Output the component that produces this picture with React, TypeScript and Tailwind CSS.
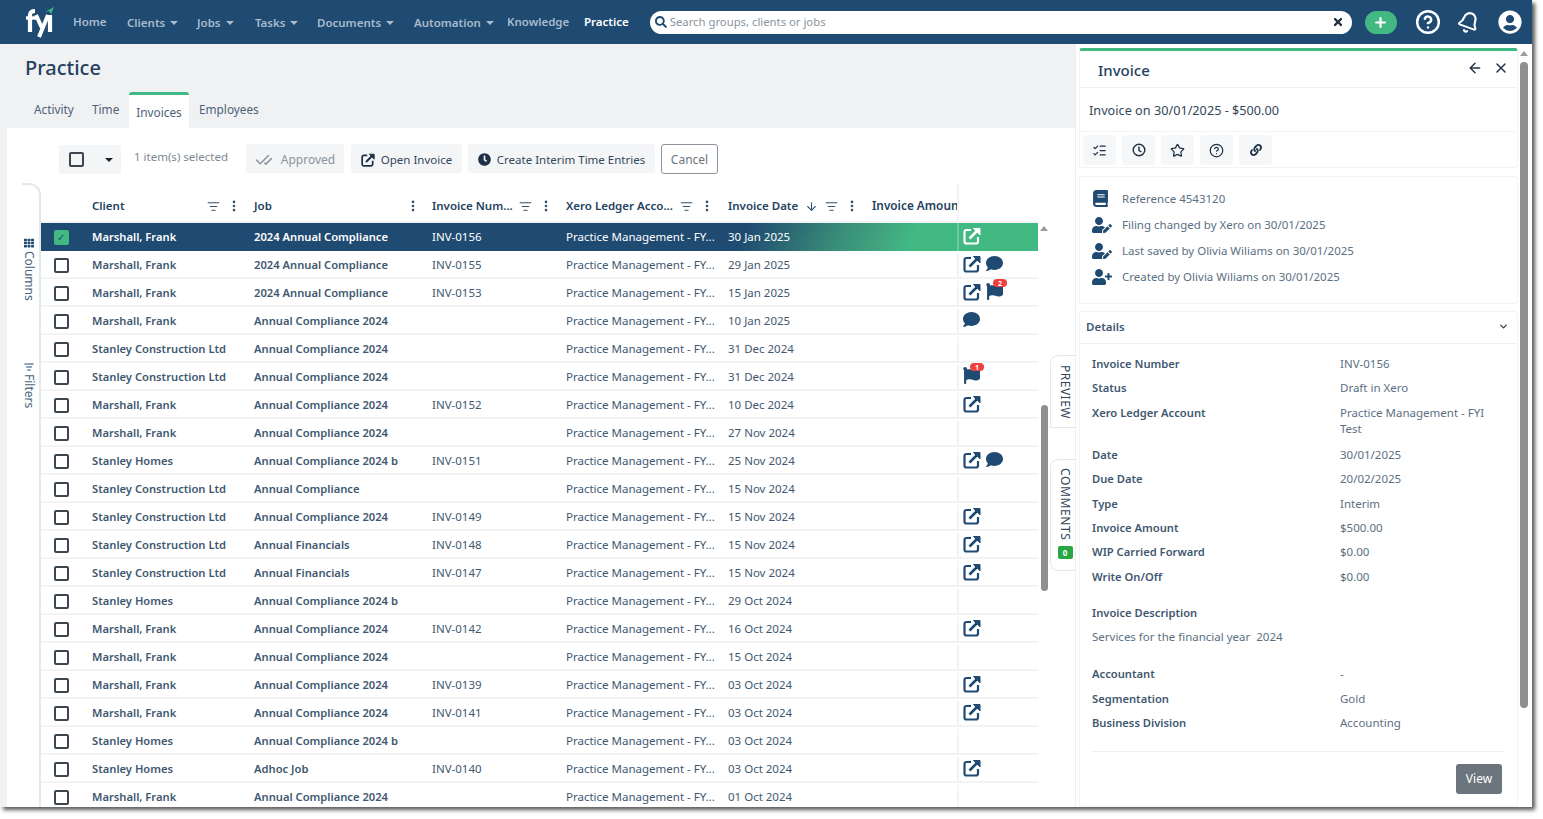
import {
  ArrowDown,
  ArrowLeft,
  Bell,
  CheckCheck,
  ChevronDown,
  CircleHelp,
  EllipsisVertical,
  ListChecks,
  ListFilter,
  Plus,
  Star,
  X,
} from 'lucide-react'
import { FaBook, FaClock, FaComment, FaFlag, FaLink, FaSearch, FaTh, FaTimes, FaUserCircle, FaUserEdit, FaUserPlus } from 'react-icons/fa'

type Row = {
  client: string
  job: string
  inv?: string
  date: string
  open?: boolean
  comment?: boolean
  flag?: number
}

const ROWS: Row[] = [
  { client: 'Marshall, Frank', job: '2024 Annual Compliance', inv: 'INV-0156', date: '30 Jan 2025', open: true },
  { client: 'Marshall, Frank', job: '2024 Annual Compliance', inv: 'INV-0155', date: '29 Jan 2025', open: true, comment: true },
  { client: 'Marshall, Frank', job: '2024 Annual Compliance', inv: 'INV-0153', date: '15 Jan 2025', open: true, flag: 2 },
  { client: 'Marshall, Frank', job: 'Annual Compliance 2024', date: '10 Jan 2025', comment: true },
  { client: 'Stanley Construction Ltd', job: 'Annual Compliance 2024', date: '31 Dec 2024' },
  { client: 'Stanley Construction Ltd', job: 'Annual Compliance 2024', date: '31 Dec 2024', flag: 1 },
  { client: 'Marshall, Frank', job: 'Annual Compliance 2024', inv: 'INV-0152', date: '10 Dec 2024', open: true },
  { client: 'Marshall, Frank', job: 'Annual Compliance 2024', date: '27 Nov 2024' },
  { client: 'Stanley Homes', job: 'Annual Compliance 2024 b', inv: 'INV-0151', date: '25 Nov 2024', open: true, comment: true },
  { client: 'Stanley Construction Ltd', job: 'Annual Compliance', date: '15 Nov 2024' },
  { client: 'Stanley Construction Ltd', job: 'Annual Compliance 2024', inv: 'INV-0149', date: '15 Nov 2024', open: true },
  { client: 'Stanley Construction Ltd', job: 'Annual Financials', inv: 'INV-0148', date: '15 Nov 2024', open: true },
  { client: 'Stanley Construction Ltd', job: 'Annual Financials', inv: 'INV-0147', date: '15 Nov 2024', open: true },
  { client: 'Stanley Homes', job: 'Annual Compliance 2024 b', date: '29 Oct 2024' },
  { client: 'Marshall, Frank', job: 'Annual Compliance 2024', inv: 'INV-0142', date: '16 Oct 2024', open: true },
  { client: 'Marshall, Frank', job: 'Annual Compliance 2024', date: '15 Oct 2024' },
  { client: 'Marshall, Frank', job: 'Annual Compliance 2024', inv: 'INV-0139', date: '03 Oct 2024', open: true },
  { client: 'Marshall, Frank', job: 'Annual Compliance 2024', inv: 'INV-0141', date: '03 Oct 2024', open: true },
  { client: 'Stanley Homes', job: 'Annual Compliance 2024 b', date: '03 Oct 2024' },
  { client: 'Stanley Homes', job: 'Adhoc Job', inv: 'INV-0140', date: '03 Oct 2024', open: true },
  { client: 'Marshall, Frank', job: 'Annual Compliance 2024', date: '01 Oct 2024' },
]

const NAV = [
  { label: 'Home', w: 'w-[54px]' },
  { label: 'Clients', w: 'w-[70px]', caret: true },
  { label: 'Jobs', w: 'w-[58px]', caret: true },
  { label: 'Tasks', w: 'w-[62px]', caret: true },
  { label: 'Documents', w: 'w-[97px]', caret: true },
  { label: 'Automation', w: 'w-[93px]', caret: true },
  { label: 'Knowledge', w: 'w-[77px]' },
]

const COLS = 'grid grid-cols-[51px_162px_178px_134px_162px_144px_85px_81px]'

function Caret({ className }: { className: string }) {
  return <span className={`inline-block h-0 w-0 border-x-[4px] border-t-[4px] border-x-transparent ${className}`} />
}

function UpCaret() {
  return <span className="inline-block h-0 w-0 border-x-[4px] border-b-[5px] border-x-transparent border-b-[#9a9a9a]" />
}

function OpenIcon({ className, size = 18 }: { className: string; size?: number }) {
  return (
    <svg width={size} height={size} viewBox="0 0 18 18" fill="none" stroke="currentColor" className={className}>
      <path d="M8 3H3.500A2 2 0 0 0 1.500 5v9.500a2 2 0 0 0 2 2H13a2 2 0 0 0 2-2V10" strokeWidth="2.200" />
      <path d="M6.500 11.500L15.500 2.500" strokeWidth="2.600" />
      <path d="M10.500 1.500h6.500V8z" fill="currentColor" strokeWidth="1" />
    </svg>
  )
}

function Logo() {
  return (
    <svg width="36" height="36" viewBox="0 0 36 36" className="shrink-0">
      <path d="M25 8l9-5-3 7-2-3z" fill="#42b883" />
      <path d="M10 28V11c0-3 2-4 5-4" fill="none" stroke="#fff" strokeWidth="4.200" />
      <path d="M6 14h10" fill="none" stroke="#fff" strokeWidth="3.400" />
      <path d="M16 11l6 13" fill="none" stroke="#fff" strokeWidth="4" />
      <path d="M28 11l-9 22" fill="none" stroke="#fff" strokeWidth="4" />
      <path d="M30 11v17" fill="none" stroke="#fff" strokeWidth="4.200" />
    </svg>
  )
}

function Header() {
  return (
    <header className="flex h-[44px] shrink-0 items-center bg-[#1f4a72] pl-[20px]">
      <Logo />
      <nav className="ml-[17px] flex items-center text-[11.500px] font-semibold text-[#a9bbcc]">
        {NAV.map((n) => (
          <div key={n.label} className={`flex items-center gap-[5px] ${n.w} ${n.caret ? 'pt-[2px]' : ''}`}>
            <span>{n.label}</span>
            {n.caret && <Caret className="border-t-[#a9bbcc]" />}
          </div>
        ))}
        <span className="text-white">Practice</span>
      </nav>
      <div className="ml-[21px] flex h-[23px] w-[702px] items-center rounded-full bg-white pl-[5px] pr-[8px] text-[11.300px] text-[#8a949e]">
        <FaSearch className="mr-[3px] text-[12px] text-[#1f4a72]" />
        <span className="flex-1">Search groups, clients or jobs</span>
        <FaTimes className="text-[12px] text-[#1d2b3a]" />
      </div>
      <div className="ml-[13px] flex h-[23px] w-[32px] items-center justify-center rounded-full bg-[#42b883]">
        <Plus size={15} strokeWidth={3.500} className="text-white" />
      </div>
      <CircleHelp size={26} strokeWidth={2.300} className="ml-[18px] text-white" />
      <Bell size={23} strokeWidth={2.200} className="ml-[16px] rotate-[20deg] text-white" />
      <FaUserCircle size={24} className="ml-[18px] text-white" />
    </header>
  )
}

function ToolButton({ children, className }: { children: React.ReactNode; className: string }) {
  return (
    <div className={`flex h-[29px] items-center justify-center rounded-[3px] bg-[#f4f5f6] pt-[2px] text-[11.500px] ${className}`}>
      {children}
    </div>
  )
}

function Toolbar() {
  return (
    <div className="flex h-[55px] shrink-0 items-start pl-[52px] pt-[16px]">
      <div className="mt-[1px] flex h-[29px] w-[62px] items-center rounded-[3px] bg-[#f4f5f6] pl-[10px]">
        <span className="h-[15px] w-[15px] rounded-[2px] border-2 border-[#3d4650]" />
        <Caret className="ml-[21px] border-t-[#222]" />
      </div>
      <span className="ml-[13px] mt-[4px] w-[112px] text-[11.500px] text-[#7d8894]">1 item(s) selected</span>
      <ToolButton className="w-[98px] gap-[8px] text-[#8a949e]">
        <CheckCheck size={18} className="text-[#8a949e]" />
        <span className="text-[12px]">Approved</span>
      </ToolButton>
      <ToolButton className="ml-[7px] w-[111px] gap-[6px] text-[#33475b]">
        <OpenIcon size={14} className="text-[#1e3146]" />
        Open Invoice
      </ToolButton>
      <ToolButton className="ml-[6px] w-[187px] gap-[6px] text-[#33475b]">
        <FaClock size={13} className="text-[#1e3146]" />
        Create Interim Time Entries
      </ToolButton>
      <div className="ml-[6px] flex h-[30px] w-[57px] items-center justify-center rounded-[3px] border border-[#8b949c] pt-[1px] text-[12px] text-[#6c757d]">
        Cancel
      </div>
    </div>
  )
}

function SideRail() {
  return (
    <div className="ml-[15px] w-[19px] shrink-0 rounded-tr-[12px] border-r-2 border-t-2 border-[#e3e8ea] text-[#4a6580]">
      <div className="flex flex-col items-center pr-[3px] pt-[53px]">
        <FaTh size={10} className="text-[#1f4a72]" />
        <span className="mt-[3px] text-[12px] leading-none [writing-mode:vertical-rl]">Columns</span>
        <ListFilter size={10} strokeWidth={2.500} className="mt-[61px] text-[#1f4a72]" />
        <span className="mt-[2px] text-[12px] leading-none [writing-mode:vertical-rl]">Filters</span>
      </div>
    </div>
  )
}

function HeadCell({ label, filter, menu = true, sort }: { label: string; filter?: boolean; menu?: boolean; sort?: boolean }) {
  return (
    <div className="flex h-full items-center pr-[3px] text-[11.500px] font-semibold text-[#24415f]">
      <span className="min-w-0 flex-1 whitespace-nowrap">{label}</span>
      {sort && <ArrowDown size={13} className="mr-[7px] text-[#33506c]" />}
      {filter && <ListFilter size={13} className="mr-[7px] text-[#33506c]" />}
      {menu && <EllipsisVertical size={14} strokeWidth={2.500} className="mr-[3px] text-[#33506c]" />}
    </div>
  )
}

function RowIcons({ row, selected }: { row: Row; selected: boolean }) {
  return (
    <div className={`flex h-full items-start gap-[5px] pl-[4px] ${selected ? 'pt-[4px]' : 'pt-[2px]'}`}>
      {row.open && <OpenIcon className={selected ? 'text-white' : 'text-[#1f4a72]'} />}
      {row.comment && <FaComment size={17} className="text-[#1f4a72]" />}
      {row.flag && (
        <div className="relative">
          <FaFlag size={17} className="text-[#1f4a72]" />
          <span className="absolute left-[7px] top-[-4px] flex h-[8px] w-[14px] items-center justify-center rounded-full bg-[#ef3f3f] text-[7px] font-bold leading-none text-white">
            {row.flag}
          </span>
        </div>
      )}
    </div>
  )
}

function TableRow({ row, selected }: { row: Row; selected: boolean }) {
  const text = selected ? 'text-white' : 'text-[#3f5870]'
  return (
    <div
      className={`${COLS} h-[28px] shrink-0 items-center text-[11.500px] ${
        selected
          ? 'bg-[linear-gradient(115deg,#1f4a72_0%,#1f4a72_70%,#2f7375_76%,#3a9079_80%,#3f9f7d_83%,#42b883_87%,#42b883_100%)]'
          : 'border-b-2 border-[#f1f3f4] pt-[2px]'
      } ${text}`}
    >
      <div className="flex justify-center pr-[11px]">
        {selected ? (
          <span className="flex h-[15px] w-[15px] items-center justify-center rounded-[2px] bg-[#42b883] text-[10px] text-[#1f4a72]">
            ✓
          </span>
        ) : (
          <span className="h-[15px] w-[15px] rounded-[2px] border-2 border-[#3d4650]" />
        )}
      </div>
      <div className="text-[11.200px] font-semibold">{row.client}</div>
      <div className="text-[11.200px] font-semibold">{row.job}</div>
      <div>{row.inv}</div>
      <div>Practice Management - FY...</div>
      <div>{row.date}</div>
      <div />
      <div className={`h-full border-l-2 ${selected ? 'border-[#6dcaa0]' : 'border-[#f1f3f4]'}`}>
        <RowIcons row={row} selected={selected} />
      </div>
    </div>
  )
}

function Table() {
  return (
    <div className="relative flex w-[997px] shrink-0 flex-col overflow-hidden">
      <div className={`${COLS} h-[40px] shrink-0 items-center border-b-2 border-[#f1f3f4] pt-[6px]`}>
        <div />
        <div className="h-full pr-[7px]"><HeadCell label="Client" filter /></div>
        <div className="h-full pr-[6px]"><HeadCell label="Job" /></div>
        <div className="h-full pr-[7px]"><HeadCell label="Invoice Num..." filter /></div>
        <div className="h-full pr-[8px]"><HeadCell label="Xero Ledger Acco..." filter /></div>
        <div className="h-full pr-[7px]"><HeadCell label="Invoice Date" sort filter /></div>
        <div className="overflow-hidden whitespace-nowrap text-[11.800px] font-semibold text-[#24415f]">Invoice Amount</div>
        <div className="-mt-[6px] h-[40px] border-l-2 border-[#f1f3f4]" />
      </div>
      {ROWS.map((r, i) => (
        <TableRow key={i} row={r} selected={i === 0} />
      ))}
    </div>
  )
}

function Scrollbar() {
  return (
    <div className="flex w-[12px] shrink-0 flex-col items-center pt-[43px]">
      <UpCaret />
      <div className="mt-[174px] h-[186px] w-[7px] rounded-full bg-[#8f8f8f]" />
    </div>
  )
}

function SideTabs() {
  return (
    <div className="flex w-[25px] shrink-0 flex-col pt-[172px] text-[#33475b]">
      <div className="flex h-[73px] items-center justify-center rounded-tl-[8px] border-y border-l border-[#e6e9eb] pl-[4px] text-[12px]">
        <span className="leading-none tracking-[0.5px] [writing-mode:vertical-rl]">PREVIEW</span>
      </div>
      <div className="mt-[31px] flex h-[112px] flex-col items-center rounded-l-[8px] border-y border-l border-[#e6e9eb] pl-[4px] pt-[8px] text-[12px]">
        <span className="leading-none tracking-[0.6px] [writing-mode:vertical-rl]">COMMENTS</span>
        <span className="mt-[6px] flex h-[13px] w-[15px] items-center justify-center rounded-[2px] bg-[#28a745] text-[8px] font-bold text-white">0</span>
      </div>
    </div>
  )
}

function Main() {
  return (
    <main className="flex w-[1075px] shrink-0 flex-col bg-[#f0f1f3]">
      <h1 className="pl-[25px] pt-[9px] text-[20px] font-medium leading-[30px] text-[#24415f]">Practice</h1>
      <div className="mt-[9px] flex h-[36px] items-end pl-[34px] text-[11.800px] text-[#4d6277]">
        <span className="mb-[9px] w-[58px]">Activity</span>
        <span className="mb-[9px] w-[37px]">Time</span>
        <span className="flex h-[36px] w-[60px] items-center justify-center rounded-t-[3px] border-t-[3px] border-[#42b883] bg-white pt-[3px]">Invoices</span>
        <span className="mb-[9px] ml-[10px]">Employees</span>
      </div>
      <div className="ml-[7px] flex min-h-0 flex-1 flex-col bg-white">
        <Toolbar />
        <div className="flex min-h-0 flex-1">
          <SideRail />
          <Table />
          <Scrollbar />
          <SideTabs />
        </div>
      </div>
    </main>
  )
}

function Detail({ label, value, className = 'h-[24.400px]' }: { label: string; value: string; className?: string }) {
  return (
    <div className={`flex items-start leading-[24px] ${className}`}>
      <span className="w-[248px] shrink-0 text-[11.200px] font-semibold text-[#3f5870]">{label}</span>
      <span className="flex-1 text-[#5b6f82]">{value}</span>
    </div>
  )
}

function Meta({ icon, text }: { icon: React.ReactNode; text: string }) {
  return (
    <div className="flex h-[25.900px] items-center">
      <span className="flex w-[30px] shrink-0 text-[#1f4a72]">{icon}</span>
      <span>{text}</span>
    </div>
  )
}

function IconBtn({ children }: { children: React.ReactNode }) {
  return <div className="flex h-[30px] w-[33px] items-center justify-center rounded-[3px] bg-[#f6f7f8] text-[#1e3146]">{children}</div>
}

function ClockOutline() {
  return (
    <svg width="14" height="14" viewBox="0 0 14 14" fill="none" stroke="currentColor" strokeWidth="1.400">
      <circle cx="7" cy="7" r="5.800" />
      <path d="M7 3.500V7.500L9.500 9" />
    </svg>
  )
}

function InvoicePanel() {
  return (
    <aside className="flex min-h-0 flex-1 border-l border-[#eceef0] bg-white pl-[3px] pt-[4px]">
      <div className="flex w-[439px] shrink-0 flex-col">
        <div className="h-[83px] rounded-t-[3px] border-x border-t-[3px] border-x-[#f1f3f4] border-t-[#42b883]">
          <div className="flex h-[37px] items-center border-b border-[#eef0f2] pl-[18px] pr-[8px] pt-[2px] text-[15px] font-medium text-[#24415f]">
            <span className="flex-1">Invoice</span>
            <ArrowLeft size={16} strokeWidth={2.200} className="-mt-[4px] mr-[10px] text-[#1e3146]" />
            <X size={16} strokeWidth={2.200} className="-mt-[4px] text-[#1e3146]" />
          </div>
          <div className="flex h-[43px] items-center pl-[9px] pt-[2px] text-[12.700px] text-[#33475b]">
            Invoice on 30/01/2025 - $500.00
          </div>
        </div>
        <div className="flex h-[37px] gap-[6px] rounded-b-[3px] border border-[#f1f3f4] pl-[3px] pt-[3px]">
          <IconBtn><ListChecks size={15} /></IconBtn>
          <IconBtn><ClockOutline /></IconBtn>
          <IconBtn><Star size={15} /></IconBtn>
          <IconBtn><CircleHelp size={15} /></IconBtn>
          <IconBtn><FaLink size={12} /></IconBtn>
        </div>
        <div className="mt-[8px] h-[128px] rounded-[3px] border border-[#f1f3f4] pl-[12px] pt-[9px] text-[11.500px] text-[#5b6f82]">
          <Meta icon={<FaBook size={17} />} text="Reference 4543120" />
          <Meta icon={<FaUserEdit size={20} />} text="Filing changed by Xero on 30/01/2025" />
          <Meta icon={<FaUserEdit size={20} />} text="Last saved by Olivia Wiliams on 30/01/2025" />
          <Meta icon={<FaUserPlus size={20} />} text="Created by Olivia Wiliams on 30/01/2025" />
        </div>
        <div className="mt-[7px] flex min-h-0 flex-1 flex-col rounded-[3px] border border-[#f1f3f4] text-[11.500px]">
          <div className="flex h-[32px] shrink-0 items-center border-b border-[#eef0f2] pb-[2px] pl-[6px] pr-[8px] text-[11.500px] font-semibold text-[#3f5870]">
            <span className="flex-1">Details</span>
            <ChevronDown size={11} strokeWidth={3} className="text-[#33475b]" />
          </div>
          <div className="flex flex-col px-[12px] pt-[8px]">
            <Detail label="Invoice Number" value="INV-0156" />
            <Detail label="Status" value="Draft in Xero" />
            <Detail label="Xero Ledger Account" value="Practice Management - FYI Test" className="h-[42px] [&>span:last-child]:pr-[5px] [&>span:last-child]:pt-[4px] [&>span:last-child]:leading-[16px]" />
            <Detail label="Date" value="30/01/2025" />
            <Detail label="Due Date" value="20/02/2025" />
            <Detail label="Type" value="Interim" />
            <Detail label="Invoice Amount" value="$500.00" />
            <Detail label="WIP Carried Forward" value="$0.00" />
            <Detail label="Write On/Off" value="$0.00" />
            <div className="mt-[12px] text-[11.200px] font-semibold leading-[24px] text-[#3f5870]">Invoice Description</div>
            <div className="leading-[24px] text-[#5b6f82]">Services for the financial year&nbsp; 2024</div>
            <div className="mt-[13px]">
              <Detail label="Accountant" value="-" />
              <Detail label="Segmentation" value="Gold" />
              <Detail label="Business Division" value="Accounting" />
            </div>
            <div className="mt-[16px] border-t border-[#eef0f2] pt-[12px]">
              <div className="ml-auto mr-[3px] flex h-[30px] w-[46px] items-center justify-center rounded-[3px] bg-[#6c757d] text-[12px] text-white">View</div>
            </div>
          </div>
        </div>
      </div>
      <div className="flex w-[12px] shrink-0 flex-col items-center pt-[3px]">
        <UpCaret />
        <div className="mt-[6px] h-[646px] w-[8px] rounded-full bg-[#8f8f8f]" />
      </div>
    </aside>
  )
}

export default function App() {
  return (
    <div className="h-[819px] w-[1543px] overflow-hidden bg-white font-['Noto_Sans',sans-serif]">
      <div className="flex h-[807px] w-[1532px] flex-col overflow-hidden shadow-[3px_3px_4px_rgba(0,0,0,0.65)]">
        <Header />
        <div className="flex min-h-0 flex-1">
          <Main />
          <InvoicePanel />
        </div>
      </div>
    </div>
  )
}
